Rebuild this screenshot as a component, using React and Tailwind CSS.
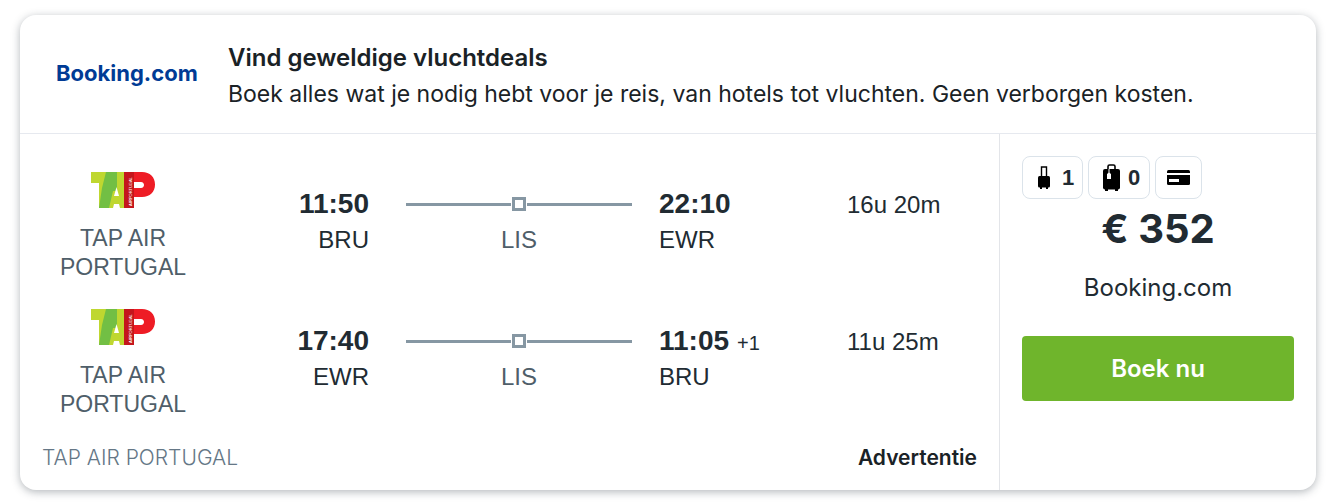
const SEGMENTS = [
  {
    id: 'outbound',
    airline: 'TAP AIR PORTUGAL',
    departure: { time: '11:50', airport: 'BRU' },
    stop: 'LIS',
    arrival: { time: '22:10', airport: 'EWR' },
    duration: '16u 20m',
  },
  {
    id: 'inbound',
    airline: 'TAP AIR PORTUGAL',
    departure: { time: '17:40', airport: 'EWR' },
    stop: 'LIS',
    arrival: { time: '11:05', airport: 'BRU', days: '+1' },
    duration: '11u 25m',
  },
];

function TapLogo() {
  return (
    <svg viewBox="0 0 64 36" className="h-9 w-16" role="img" aria-label="TAP Air Portugal">
      <path d="M0 0H34V36H29L28 32H23L22 36H8V11H0Z" fill="#bfd730" />
      <path d="M15 0H26V19H22L18 36H8L11 16Z" fill="#72bf44" />
      <path d="M25.500 15L28 24H23Z" fill="#fff" />
      <path d="M33 0H51C59 0 64 5 64 12.500C64 20 59 25 51 25H43V36H33Z" fill="#ee1c25" />
      <path d="M33 0H43V36H33Z" fill="#c4161c" />
      <path d="M43 10H50C54 10 54 16 50 16H43Z" fill="#fff" />
      <text x="-34" y="41" transform="rotate(-90)" fill="#fff" fontSize="4" fontFamily="Liberation Sans, sans-serif">
        <tspan fontWeight="700">AIR</tspan>PORTUGAL
      </text>
    </svg>
  );
}

function CabinBagIcon() {
  return (
    <svg viewBox="0 0 12 23" className="h-[23px] w-3" aria-hidden="true">
      <path d="M3.500 11V1H8.500V11" fill="none" stroke="#000" strokeWidth="1.400" />
      <rect x="0" y="10" width="12" height="11.500" rx="1.500" />
      <path d="M2 21H4V23H2ZM8 21H10V23H8Z" />
    </svg>
  );
}

function SuitcaseIcon() {
  return (
    <svg viewBox="0 0 17 27" className="h-[27px] w-[17px]" aria-hidden="true">
      <path d="M5 6V2.500Q5 1 6.500 1H10.500Q12 1 12 2.500V6" fill="none" stroke="#000" strokeWidth="1.600" />
      <rect x="0" y="5" width="17" height="20.500" rx="2" />
      <path d="M2 25H5V27H2ZM12 25H15V27H12Z" />
      <path d="M6 5V9" stroke="#fff" strokeWidth="1" />
      <path d="M4 10L6 8.500L8 10V15H4Z" fill="#fff" />
    </svg>
  );
}

function CardIcon() {
  return (
    <svg viewBox="0 0 23 15" className="h-[15px] w-[23px]" aria-hidden="true">
      <path d="M1.500 0H21.500Q23 0 23 1.500V3H0V1.500Q0 0 1.500 0Z" />
      <path d="M0 5H23V13.500Q23 15 21.500 15H1.500Q0 15 0 13.500Z" />
      <path d="M2 9H12V12H2Z" fill="#fff" />
    </svg>
  );
}

function Segment({ segment }) {
  const { airline, departure, stop, arrival, duration } = segment;

  return (
    <li className="flex font-['Liberation_Sans',Arial,sans-serif] text-2xl text-[#212b32]">
      <div className="flex w-[162px] flex-col items-center text-[#4f5e69]">
        <TapLogo />
        <p className="mt-4 w-[140px] text-center text-[23px] leading-[29px]">{airline}</p>
      </div>
      <div className="mt-3.5 w-[165px] text-right">
        <p className="text-[28px] leading-9 font-bold">{departure.time}</p>
        <p className="leading-9">{departure.airport}</p>
      </div>
      <div className="mt-3.5 mr-[27px] ml-[37px] flex-1 text-center">
        <div className="flex h-9 items-center gap-px">
          <span className="h-[3px] flex-1 bg-[#8697a3]" />
          <span className="size-3.5 border-3 border-[#8697a3]" />
          <span className="h-[3px] flex-1 bg-[#8697a3]" />
        </div>
        <p className="leading-9 text-[#4f5e69]">{stop}</p>
      </div>
      <div className="mt-3.5 w-[188px]">
        <p className="text-[28px] leading-9 font-bold">
          {arrival.time}
          {arrival.days && <span className="ml-2 text-xl font-normal">{arrival.days}</span>}
        </p>
        <p className="leading-9">{arrival.airport}</p>
      </div>
      <p className="mt-[15px] mr-[34px] w-24 leading-9">{duration}</p>
    </li>
  );
}

export default function App() {
  return (
    <main className="bg-white pt-[15px] pr-3 pb-3 pl-5 font-[Inter,sans-serif] text-[#212b32]">
      <article className="rounded-2xl bg-white shadow-[0_2px_8px_rgba(37,50,60,0.35)]">
        {/* Sponsor */}
        <header className="flex items-center border-b border-[#e6e9ef] pt-[25px] pr-6 pb-[21px] pl-9">
          <a href="#booking" className="w-[172px] pb-1.5 text-[22px] leading-8 font-bold text-[#003b95]">
            Booking.com
          </a>
          <div className="flex-1 leading-9 text-[#1a2226]">
            <h2 className="text-2xl leading-9 font-semibold">Vind geweldige vluchtdeals</h2>
            <p className="text-[23px] leading-9">
              Boek alles wat je nodig hebt voor je reis, van hotels tot vluchten. Geen verborgen kosten.
            </p>
          </div>
        </header>

        <div className="flex">
          {/* Flights */}
          <section className="flex-1 px-[22px] pt-[38px] pb-3.5">
            <ul className="flex flex-col gap-[27px]">
              {SEGMENTS.map((segment) => (
                <Segment key={segment.id} segment={segment} />
              ))}
            </ul>
            <div className="mt-[21px] flex items-center justify-between text-[21px] leading-9">
              <p className="font-light text-[#657786]">TAP AIR PORTUGAL</p>
              <p className="font-semibold text-[#1a2226]">Advertentie</p>
            </div>
          </section>

          {/* Price */}
          <aside className="flex w-[317px] flex-col border-l border-[#e3e5e9] px-[22px] pt-[22px]">
            <ul className="flex gap-[5px] font-['Liberation_Sans',Arial,sans-serif] text-[22px] font-bold">
              <li className="flex h-[43px] w-[61px] items-center gap-3 rounded-lg border border-[#dbe3ea] pl-[15px]">
                <CabinBagIcon />1
              </li>
              <li className="flex h-[43px] w-[62px] items-center gap-2 rounded-lg border border-[#dbe3ea] pl-3.5">
                <SuitcaseIcon />0
              </li>
              <li className="flex h-[43px] w-[47px] items-center justify-center rounded-lg border border-[#dbe3ea]">
                <CardIcon />
              </li>
            </ul>
            <p className="mt-1 text-center text-[40px] leading-[52px] font-bold">€ 352</p>
            <p className="mt-[15px] text-center text-2xl leading-9">Booking.com</p>
            <button type="button" className="mt-[30px] h-[65px] rounded bg-[#6fb52c] text-2xl font-semibold text-white">
              Boek nu
            </button>
          </aside>
        </div>
      </article>
    </main>
  );
}
